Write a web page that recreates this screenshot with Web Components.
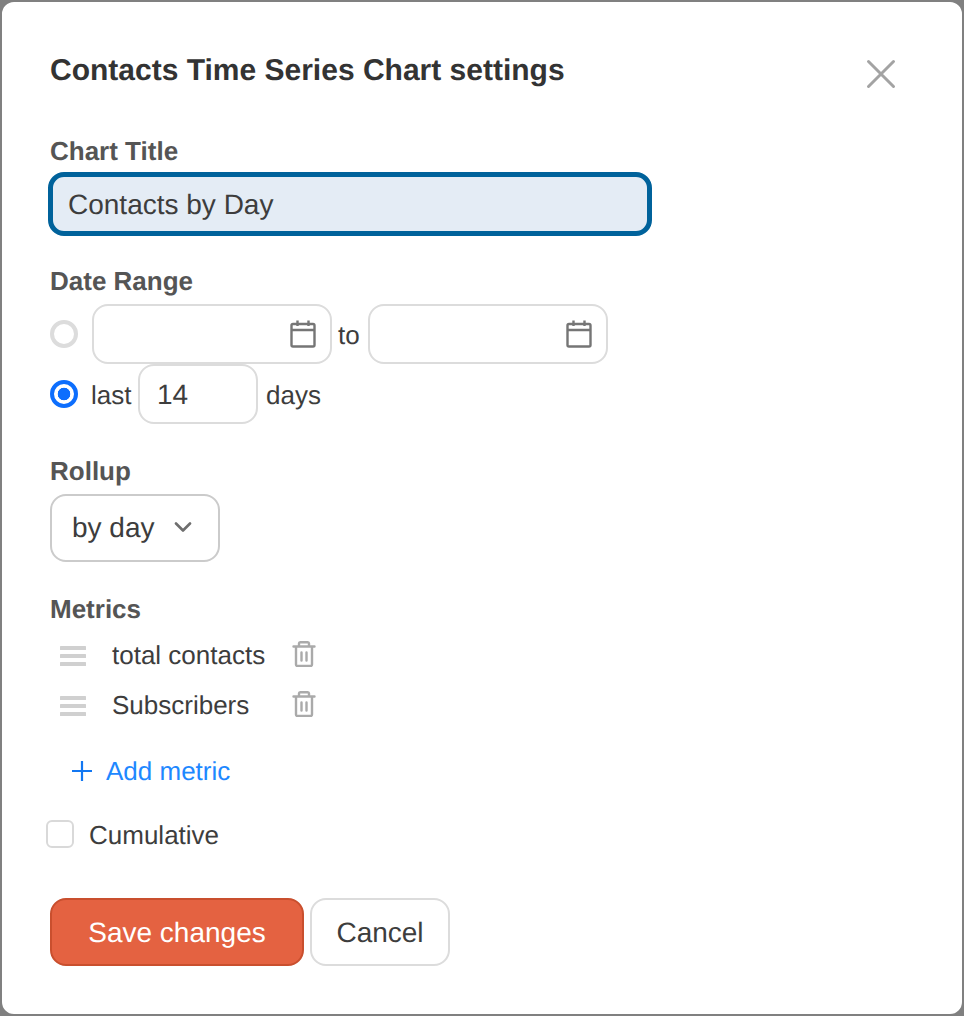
<!DOCTYPE html>
<html>
<head>
<meta charset="utf-8">
<style>
  html, body { margin: 0; padding: 0; background: #808080; }
  body { font-family: "Liberation Sans", Arial, sans-serif; color: #3d3d3d; text-rendering: geometricPrecision; }
</style>
</head>
<body>
<settings-dialog heading="Contacts Time Series Chart settings">
  <form-field label="Chart Title" style="--label-gap: 5px; --field-gap: 29px">
    <text-field value="Contacts by Day"></text-field>
  </form-field>
  <form-field label="Date Range" style="--label-gap: 7px; --field-gap: 31px">
    <option-row>
      <radio-dot></radio-dot>
      <date-box></date-box>
      <span style="margin: 0 8px 0 6px; padding-top: 2px">to</span>
      <date-box></date-box>
    </option-row>
    <option-row>
      <radio-dot checked></radio-dot>
      <span style="margin: 0 6.5px 0 -1px; padding-top: 2px">last</span>
      <number-box value="14"></number-box>
      <span style="margin-left: 8px; padding-top: 2px">days</span>
    </option-row>
  </form-field>
  <form-field label="Rollup" style="--label-gap: 7px; --field-gap: 31px">
    <select-box value="by day"></select-box>
  </form-field>
  <form-field label="Metrics" style="--label-gap: 5px; --field-gap: 0px">
    <metric-row>total contacts</metric-row>
    <metric-row>Subscribers</metric-row>
    <add-link>Add metric</add-link>
    <check-row>Cumulative</check-row>
  </form-field>
  <div slot="actions" style="display: flex; gap: 6px">
    <action-button primary>Save changes</action-button>
    <action-button>Cancel</action-button>
  </div>
</settings-dialog>

<script>
const fontStack = '"Liberation Sans", Arial, sans-serif';

class SettingsDialog extends HTMLElement {
  constructor() {
    super();
    this.attachShadow({ mode: 'open' });
  }
  connectedCallback() {
    this.shadowRoot.innerHTML = `
      <style>
        :host {
          display: block;
          box-sizing: border-box;
          width: 964px;
          height: 1016px;
          padding: 48px 48px 0;
          background: #fff;
          border: 2px solid #808080;
          border-radius: 14px;
          font-family: ${fontStack};
          overflow: hidden;
        }
        header { display: flex; justify-content: space-between; height: 85px; }
        h1 { margin: 0; font-size: 30px; line-height: 42px; font-weight: 700; color: #333; }
        svg { margin: 9px 18px 0 0; }
        .actions { margin-top: 38px; }
      </style>
      <header>
        <h1>${this.getAttribute('heading')}</h1>
        <svg width="30" height="30" viewBox="0 0 30 30" fill="none" stroke="#a3a3a3" stroke-width="3" stroke-linecap="round">
          <path d="M2.5 2.5 L27.5 27.5 M27.5 2.5 L2.5 27.5"/>
        </svg>
      </header>
      <slot></slot>
      <div class="actions"><slot name="actions"></slot></div>
    `;
  }
}

class FormField extends HTMLElement {
  constructor() {
    super();
    this.attachShadow({ mode: 'open' });
  }
  connectedCallback() {
    this.shadowRoot.innerHTML = `
      <style>
        :host { display: block; margin-bottom: var(--field-gap, 30px); }
        label {
          display: block;
          margin-bottom: var(--label-gap, 6px);
          font-size: 26px;
          line-height: 32px;
          font-weight: 700;
          color: #555;
        }
      </style>
      <label>${this.getAttribute('label')}</label>
      <slot></slot>
    `;
  }
}

class TextField extends HTMLElement {
  constructor() {
    super();
    this.attachShadow({ mode: 'open' });
  }
  connectedCallback() {
    this.shadowRoot.innerHTML = `
      <style>
        :host {
          display: block;
          box-sizing: border-box;
          width: 604px;
          height: 64px;
          margin-left: -2px;
          padding: 0 15px;
          background: #e4ecf5;
          border: 5px solid #00629b;
          border-radius: 16px;
          font-size: 28px;
          line-height: 56px;
          color: #3d3d3d;
        }
      </style>
      ${this.getAttribute('value')}
    `;
  }
}

class OptionRow extends HTMLElement {
  constructor() {
    super();
    this.attachShadow({ mode: 'open' });
  }
  connectedCallback() {
    this.shadowRoot.innerHTML = `
      <style>
        :host {
          display: flex;
          align-items: center;
          height: 60px;
          font-size: 26px;
          color: #3d3d3d;
        }
      </style>
      <slot></slot>
    `;
  }
}

class RadioDot extends HTMLElement {
  constructor() {
    super();
    this.attachShadow({ mode: 'open' });
  }
  connectedCallback() {
    this.shadowRoot.innerHTML = `
      <style>
        :host {
          display: block;
          box-sizing: border-box;
          flex: none;
          width: 28px;
          height: 28px;
          margin-right: 14px;
          border-radius: 50%;
          border: 4px solid #dcdcdc;
          background: #fff;
        }
        :host([checked]) {
          border: 4px solid #0d6efd;
          background: radial-gradient(circle, #0d6efd 0 6px, #fff 6.6px);
        }
      </style>
    `;
  }
}

class DateBox extends HTMLElement {
  constructor() {
    super();
    this.attachShadow({ mode: 'open' });
  }
  connectedCallback() {
    this.shadowRoot.innerHTML = `
      <style>
        :host {
          display: flex;
          align-items: center;
          justify-content: flex-end;
          box-sizing: border-box;
          flex: none;
          width: 240px;
          height: 60px;
          padding-right: 14px;
          border: 2px solid #dcdcdc;
          border-radius: 16px;
          background: #fff;
        }
      </style>
      <svg width="26" height="28" viewBox="0 0 26 28" fill="none" stroke="#757575" stroke-width="2.4">
        <rect x="1.5" y="4" width="23" height="22.5" rx="1.5"/>
        <path d="M1.5 10 H24.5 M7.5 0.5 V6 M18.5 0.5 V6"/>
      </svg>
    `;
  }
}

class NumberBox extends HTMLElement {
  constructor() {
    super();
    this.attachShadow({ mode: 'open' });
  }
  connectedCallback() {
    this.shadowRoot.innerHTML = `
      <style>
        :host {
          display: flex;
          align-items: center;
          box-sizing: border-box;
          flex: none;
          width: 120px;
          height: 60px;
          padding: 2px 0 0 17px;
          border: 2px solid #dcdcdc;
          border-radius: 16px;
          font-size: 28px;
          color: #3d3d3d;
        }
      </style>
      ${this.getAttribute('value')}
    `;
  }
}

class SelectBox extends HTMLElement {
  constructor() {
    super();
    this.attachShadow({ mode: 'open' });
  }
  connectedCallback() {
    this.shadowRoot.innerHTML = `
      <style>
        :host {
          display: flex;
          align-items: center;
          justify-content: space-between;
          box-sizing: border-box;
          width: 170px;
          height: 68px;
          padding: 0 26px 0 20px;
          border: 2px solid #cbcbcb;
          border-radius: 16px;
          font-size: 28px;
          color: #3d3d3d;
        }
      </style>
      ${this.getAttribute('value')}
      <svg width="18" height="12" viewBox="0 0 18 12" fill="none" stroke="#6e6e6e" stroke-width="2.6" stroke-linecap="round" stroke-linejoin="round">
        <path d="M2 1.5 L9 8.5 L16 1.5"/>
      </svg>
    `;
  }
}

class MetricRow extends HTMLElement {
  constructor() {
    super();
    this.attachShadow({ mode: 'open' });
  }
  connectedCallback() {
    this.shadowRoot.innerHTML = `
      <style>
        :host {
          display: flex;
          align-items: center;
          height: 50px;
          font-size: 26px;
          color: #3d3d3d;
        }
        .grip { flex: none; margin: 0 26px 0 10px; }
        .text { width: 180px; }
        .trash { flex: none; margin-top: -2px; }
      </style>
      <svg class="grip" width="26" height="22" viewBox="0 0 26 22" fill="#d0d0d0">
        <rect y="2" width="26" height="4" rx="0.5"/>
        <rect y="10" width="26" height="4" rx="0.5"/>
        <rect y="18" width="26" height="4" rx="0.5"/>
      </svg>
      <span class="text"><slot></slot></span>
      <svg class="trash" width="24" height="26" viewBox="0 0 24 26" fill="none" stroke="#aaa" stroke-width="2.4" stroke-linecap="round" stroke-linejoin="round">
        <path d="M1.5 5.5 H22.5 M4 5.5 V23.5 Q4 25 5.5 25 H18.5 Q20 25 20 23.5 V5.5 M7 5.5 V2.5 Q7 1.2 8.2 1.2 H15.8 Q17 1.2 17 2.5 V5.5 M9.5 11.5 V19.5 M14.5 11.5 V19.5"/>
      </svg>
    `;
  }
}

class AddLink extends HTMLElement {
  constructor() {
    super();
    this.attachShadow({ mode: 'open' });
  }
  connectedCallback() {
    this.shadowRoot.innerHTML = `
      <style>
        :host {
          display: flex;
          align-items: center;
          gap: 14px;
          height: 50px;
          margin: 16px 0 0 22px;
          font-size: 26px;
          color: #1e88ff;
        }
      </style>
      <svg width="20" height="20" viewBox="0 0 20 20" stroke="#1277f2" stroke-width="2.2">
        <path d="M0 10 H20 M10 0 V20"/>
      </svg>
      <slot></slot>
    `;
  }
}

class CheckRow extends HTMLElement {
  constructor() {
    super();
    this.attachShadow({ mode: 'open' });
  }
  connectedCallback() {
    this.shadowRoot.innerHTML = `
      <style>
        :host {
          display: flex;
          align-items: center;
          height: 50px;
          margin: 14px 0 0 -4px;
          font-size: 26px;
          color: #3d3d3d;
        }
        .box {
          box-sizing: border-box;
          width: 28px;
          height: 28px;
          margin: -2px 15px 0 0;
          border: 2px solid #d9d9d9;
          border-radius: 6px;
        }
      </style>
      <div class="box"></div>
      <slot></slot>
    `;
  }
}

class ActionButton extends HTMLElement {
  constructor() {
    super();
    this.attachShadow({ mode: 'open' });
  }
  connectedCallback() {
    this.shadowRoot.innerHTML = `
      <style>
        :host {
          display: flex;
          align-items: center;
          justify-content: center;
          box-sizing: border-box;
          width: 140px;
          height: 68px;
          padding-top: 2px;
          background: #fff;
          border: 2px solid #dcdcdc;
          border-radius: 16px;
          font-size: 28px;
          color: #3d3d3d;
        }
        :host([primary]) {
          width: 254px;
          background: #e46241;
          border-color: #c94f2e;
          color: #fff;
        }
      </style>
      <slot></slot>
    `;
  }
}

customElements.define('settings-dialog', SettingsDialog);
customElements.define('form-field', FormField);
customElements.define('text-field', TextField);
customElements.define('option-row', OptionRow);
customElements.define('radio-dot', RadioDot);
customElements.define('date-box', DateBox);
customElements.define('number-box', NumberBox);
customElements.define('select-box', SelectBox);
customElements.define('metric-row', MetricRow);
customElements.define('add-link', AddLink);
customElements.define('check-row', CheckRow);
customElements.define('action-button', ActionButton);
</script>
</body>
</html>
